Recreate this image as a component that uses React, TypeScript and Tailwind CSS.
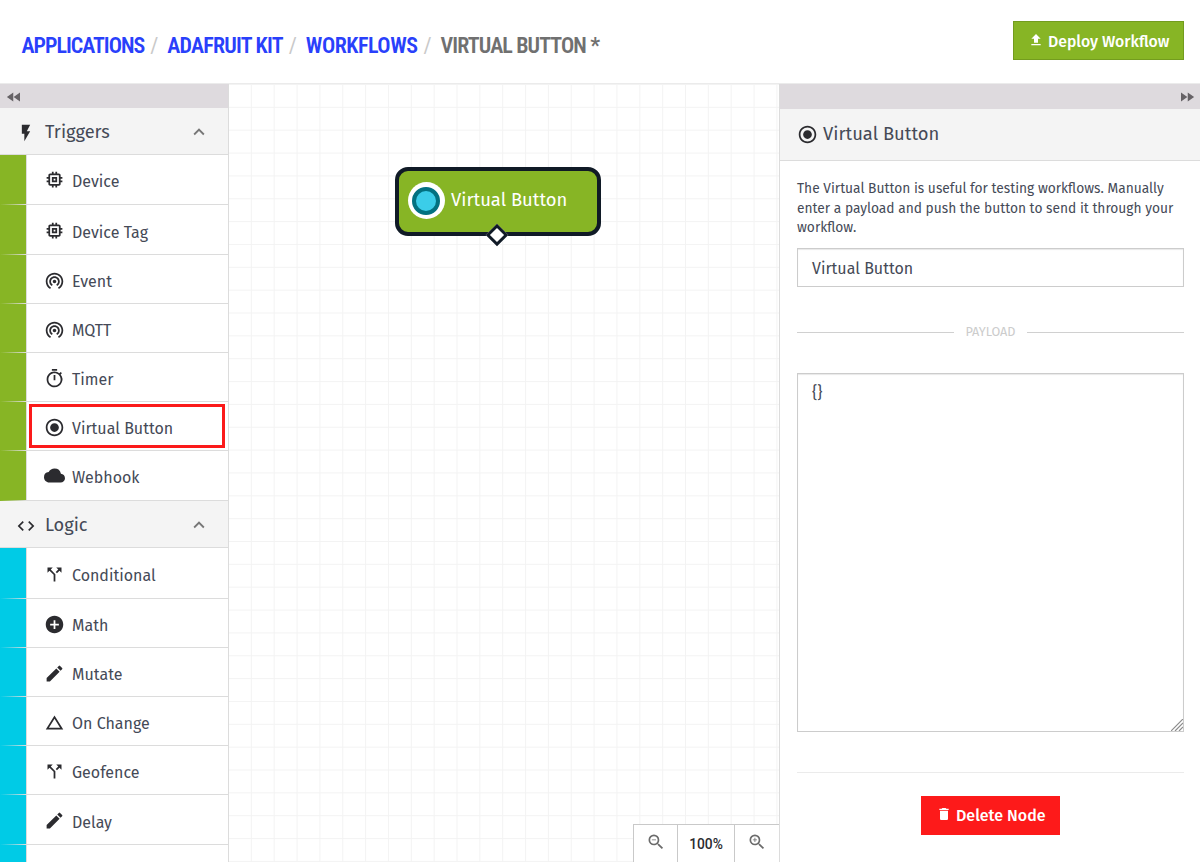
import React from 'react';
import {
  MdAddCircle, MdCallSplit, MdChangeHistory, MdCloud, MdCode, MdDelete, MdEdit, MdExpandLess,
  MdFastForward, MdFastRewind, MdFileUpload, MdFlashOn, MdMemory, MdOutlineTimer,
  MdRadioButtonChecked, MdWifiTethering, MdZoomIn, MdZoomOut,
} from 'react-icons/md';
import type { IconType } from 'react-icons';

type Item = { label: string; icon: IconType; height: string; tight?: boolean; selected?: boolean };

const triggers: Item[] = [
  { label: 'Device', icon: MdMemory, height: 'h-[50px]', tight: true },
  { label: 'Device Tag', icon: MdMemory, height: 'h-[50px]' },
  { label: 'Event', icon: MdWifiTethering, height: 'h-[49px]' },
  { label: 'MQTT', icon: MdWifiTethering, height: 'h-[49px]' },
  { label: 'Timer', icon: MdOutlineTimer, height: 'h-[49px]' },
  { label: 'Virtual Button', icon: MdRadioButtonChecked, height: 'h-[49px]', selected: true },
  { label: 'Webhook', icon: MdCloud, height: 'h-[50px]', tight: true },
];

const logic: Item[] = [
  { label: 'Conditional', icon: MdCallSplit, height: 'h-[51px]' },
  { label: 'Math', icon: MdAddCircle, height: 'h-[49px]' },
  { label: 'Mutate', icon: MdEdit, height: 'h-[49px]' },
  { label: 'On Change', icon: MdChangeHistory, height: 'h-[49px]' },
  { label: 'Geofence', icon: MdCallSplit, height: 'h-[49px]' },
  { label: 'Delay', icon: MdEdit, height: 'h-[50px]' },
];

const crumbs = [
  { label: 'APPLICATIONS', tracking: 'tracking-[-1px]' },
  { label: 'ADAFRUIT KIT', tracking: 'tracking-[-0.76px]' },
  { label: 'WORKFLOWS', tracking: 'tracking-[-0.46px]' },
];

function Row({ item, stripe }: { item: Item; stripe: string }) {
  const Icon = item.icon;
  return (
    <div className={`flex shrink-0 ${item.height}`}>
      <div className={`flex w-[27px] flex-col justify-end border-r border-[#dddddd] ${stripe}`}>
        <div className="h-px bg-gradient-to-r from-transparent to-[#dddddd]" />
      </div>
      <div className={`relative flex flex-1 items-center border-b border-[#dcdcdc] pl-[16.5px] ${item.tight ? 'pt-1' : 'pt-[6px]'}`}>
        {item.selected && <div className="absolute top-[2px] right-[3px] bottom-[2px] left-[2px] border-[3px] border-[#fb1a1a]" />}
        <Icon className="-mt-1 size-[21px] text-[#2b2b2f]" />
        <span className="ml-[7.5px] text-[16px] leading-6">{item.label}</span>
      </div>
    </div>
  );
}

function GroupHeader({ label, icon: Icon }: { label: string; icon: IconType }) {
  return (
    <div className="flex h-[47px] shrink-0 items-center border-b border-[#dcdcdc] bg-[#f4f4f4] pr-[18px] pl-4">
      <Icon className="mt-1 size-5 text-[#2b2b2f]" />
      <span className="mt-[3px] ml-[9px] flex-1 text-[18.2px]">{label}</span>
      <MdExpandLess className="mt-[2px] size-[22px] text-[#777777]" />
    </div>
  );
}

function Sidebar() {
  return (
    <aside className="flex w-[229px] shrink-0 flex-col overflow-hidden border-r border-[#dcdcdc] bg-white">
      <div className="flex h-6 shrink-0 items-center bg-[#dedade] pl-[5px]">
        <MdFastRewind className="mt-0.5 size-[18px] text-[#666266]" />
      </div>
      <GroupHeader label="Triggers" icon={MdFlashOn} />
      {triggers.map((t) => <Row key={t.label} item={t} stripe="bg-[#87b525]" />)}
      <GroupHeader label="Logic" icon={MdCode} />
      {logic.map((t) => <Row key={t.label} item={t} stripe="bg-[#00cbe6]" />)}
      <div className="w-[27px] flex-1 border-r border-[#dddddd] bg-[#00cbe6]" />
    </aside>
  );
}

function Canvas() {
  return (
    <main className="relative flex-1 overflow-hidden bg-white">
      <svg className="absolute inset-0 size-full">
        <defs>
          <pattern id="grid" y="1" width="22.85" height="22.85" patternUnits="userSpaceOnUse">
            <path d="M22.35 0V22.85M0 22.35H22.85" fill="none" stroke="#f3f3f3" strokeWidth="1" />
          </pattern>
        </defs>
        <rect width="100%" height="100%" fill="url(#grid)" />
      </svg>
      <div className="absolute top-[82.5px] left-[165.5px] flex h-[69px] w-[206px] items-center rounded-[13px] border-[4px] border-[#101a26] bg-[#87b525] pl-[9px]">
        <div className="-mt-px flex size-[37px] items-center justify-center rounded-full bg-white">
          <div className="size-[28px] rounded-full border-[4px] border-[#027180] bg-[#3bcde9]" />
        </div>
        <span className="ml-[6.5px] text-[18.4px] text-white">Virtual Button</span>
        <div className="absolute top-[56px] left-[90.5px] size-[16px] rotate-45 border-[3px] border-[#101a26] bg-white" />
      </div>
      <div className="absolute right-0 bottom-0 flex h-[38px] border-t border-l border-[#c9c9c9] bg-white text-[#6b6b6b]">
        <div className="flex w-[44px] justify-center border-r border-[#c9c9c9] pt-[7px]"><MdZoomOut className="size-5" /></div>
        <div className="w-[57px] border-r border-[#c9c9c9] pt-[9px] text-center font-['Roboto'] text-[13.8px] font-medium leading-5 text-[#2b2b2f]">100%</div>
        <div className="flex w-[44px] justify-center pt-[7px]"><MdZoomIn className="size-5" /></div>
      </div>
    </main>
  );
}

function Inspector() {
  return (
    <aside className="flex w-[421px] shrink-0 flex-col border-l border-[#dcdcdc] bg-white">
      <div className="flex h-[25px] items-center justify-end bg-[#dedade] pr-[4px]">
        <MdFastForward className="size-[18px] text-[#666266]" />
      </div>
      <div className="flex h-[52px] items-center border-b border-[#dcdcdc] bg-[#f4f4f4] pl-[16.5px]">
        <MdRadioButtonChecked className="size-[21px] text-[#2b2b2f]" />
        <span className="ml-[5.5px] text-[18.4px]">Virtual Button</span>
      </div>
      <div className="flex flex-col pt-[18px] pr-4 pl-[17px]">
        <p className="text-[13.75px] leading-[19.5px] whitespace-nowrap">
          The Virtual Button is useful for testing workflows. Manually<br />
          enter a payload and push the button to send it through your<br />
          workflow.
        </p>
        <div className="mt-[10px] flex h-[39px] items-center border border-[#cccccc] pt-[3px] pl-[14px] text-[16px] shadow-[inset_0_1px_1px_#e8e8e8]">Virtual Button</div>
        <div className="mt-[36px] flex h-[18px] items-center text-[12.7px] text-[#cccccc]">
          <div className="mt-px h-px flex-1 bg-[#d0d0d0]" />
          <span className="px-[11px] pt-px">PAYLOAD</span>
          <div className="mt-px h-px flex-1 bg-[#d0d0d0]" />
        </div>
        <div className="relative mt-[32px] h-[359px] border border-[#cccccc] pt-[7px] pl-[14px] text-[16px] shadow-[inset_0_1px_1px_#e8e8e8]">
          {'{}'}
          <svg className="absolute right-0 bottom-0 size-3" viewBox="0 0 12 12" fill="none" stroke="#8c8c8c" strokeWidth="1.2">
            <path d="M0 12L12 0M4 12L12 4M8 12L12 8" />
          </svg>
        </div>
        <div className="mt-[40px] h-px bg-[#ebebeb]" />
        <button className="mt-[23px] flex h-[39px] w-[139px] items-center self-center bg-[#fd1a1a] pt-px pl-[15px] text-[16px] font-medium text-white">
          <MdDelete className="-mt-[3px] size-4" />
          <span className="ml-[4px]">Delete Node</span>
        </button>
      </div>
    </aside>
  );
}

export default function App() {
  return (
    <div className="flex h-[862px] w-[1200px] flex-col overflow-hidden bg-white font-['Fira_Sans','Noto_Sans',sans-serif] text-[#454a57]">
      <header className="flex h-[84px] shrink-0 justify-between border-b border-[#ebebeb] pr-4 pl-[21.5px]">
        <nav className="flex pt-[31px] font-['Roboto_Condensed','Roboto',sans-serif] text-[22px] font-semibold leading-[30px] whitespace-nowrap">
          {crumbs.map((c) => (
            <React.Fragment key={c.label}>
              <span className={`text-[#2940fb] ${c.tracking}`}>{c.label}</span>
              <span className="w-[23px] pl-[6px] font-normal text-[#c9c9c9]">/</span>
            </React.Fragment>
          ))}
          <span className="tracking-[-0.88px] text-[#707070]">VIRTUAL BUTTON *</span>
        </nav>
        <button className="mt-[21px] flex h-[39px] w-[171px] items-center border border-[#739c1e] bg-[#87b525] pt-[2px] pl-[14px] text-[15.8px] font-medium text-white">
          <MdFileUpload className="-mt-1 size-4" />
          <span className="ml-[4px]">Deploy Workflow</span>
        </button>
      </header>
      <div className="flex min-h-0 flex-1">
        <Sidebar />
        <Canvas />
        <Inspector />
      </div>
    </div>
  );
}
